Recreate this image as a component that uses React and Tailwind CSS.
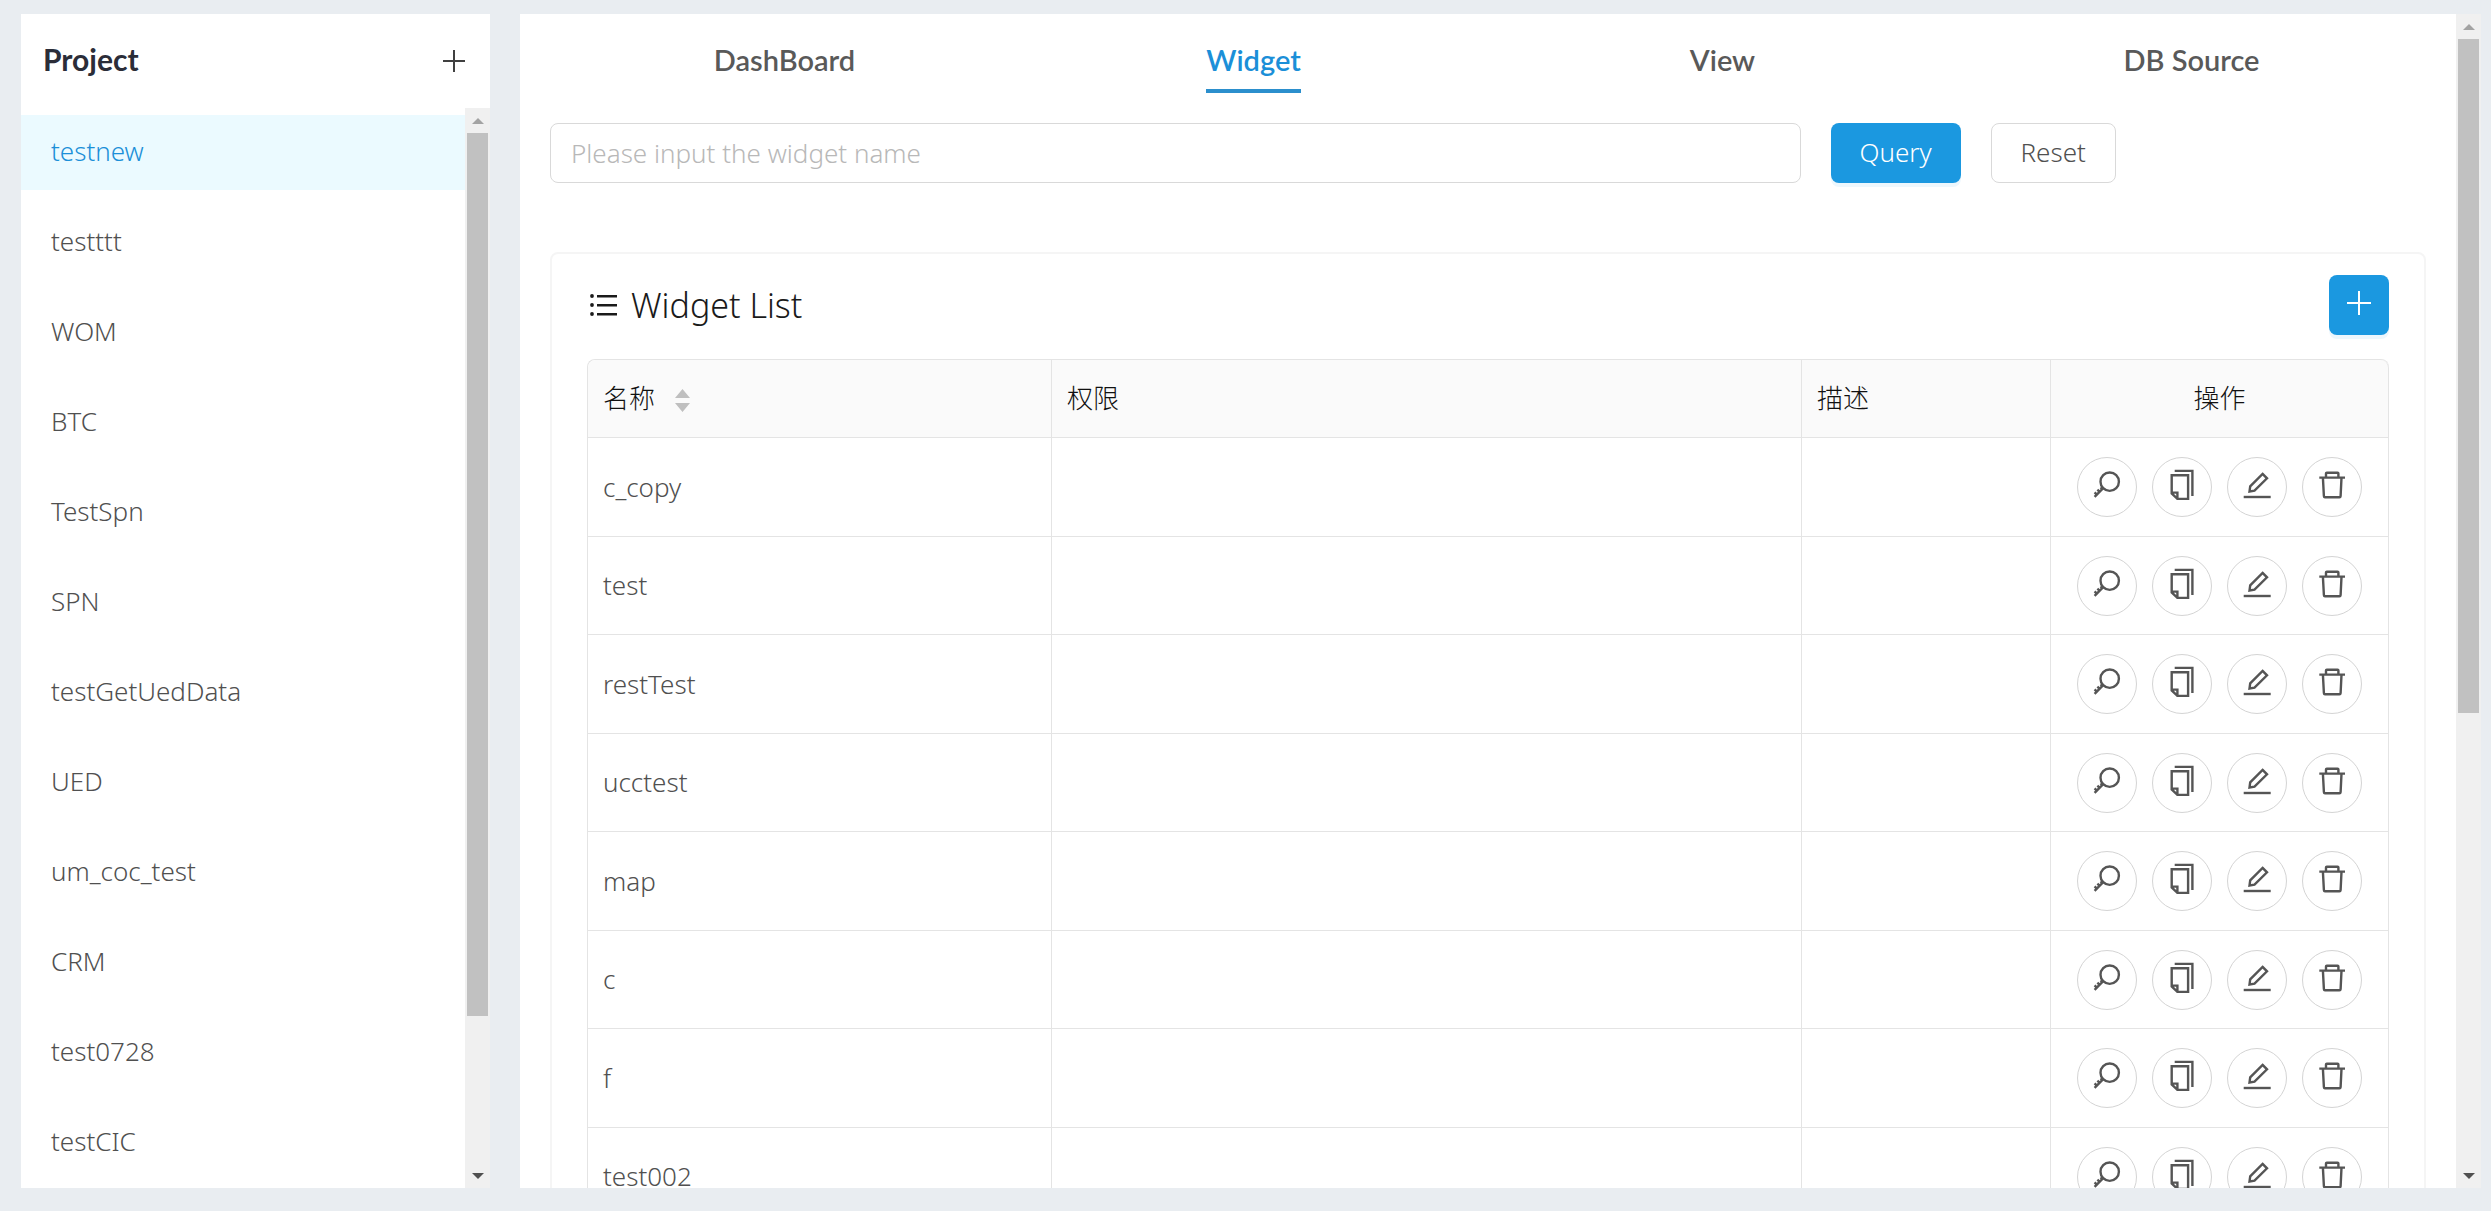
import { useState } from 'react';

const PROJECTS = [
  'testnew',
  'testttt',
  'WOM',
  'BTC',
  'TestSpn',
  'SPN',
  'testGetUedData',
  'UED',
  'um_coc_test',
  'CRM',
  'test0728',
  'testCIC',
];

const TABS = ['DashBoard', 'Widget', 'View', 'DB Source'];

const WIDGETS = ['c_copy', 'test', 'restTest', 'ucctest', 'map', 'c', 'f', 'test002'];

function Icon({ children }) {
  return (
    <svg
      className="w-8 h-8"
      viewBox="-1 -1 32 32"
      fill="none"
      stroke="currentColor"
      strokeWidth="2.4"
      aria-hidden="true"
    >
      {children}
    </svg>
  );
}

const ACTIONS = [
  {
    label: 'Permission',
    icon: (
      <Icon>
        <circle cx="17.7" cy="11.7" r="9.2" />
        <path d="M11.2 18.2 2.6 26.8M8.6 17.4l2 2M5.4 19.6l2.7 2.7M2.6 22.4l2.7 2.7" />
      </Icon>
    ),
  },
  {
    label: 'Copy',
    icon: (
      <Icon>
        <path d="M7.7 .9H25.4V26" />
        <path d="M4.7 5.3H21.1V28.9H10.4L4.7 23.4ZM4.7 22.6H10.4V28.9" />
      </Icon>
    ),
  },
  {
    label: 'Edit',
    icon: (
      <Icon>
        <path d="M20.6 3.9 25 8.3 12.5 20.7 7.5 21.5 8.2 16.3Z" />
        <path d="M1.7 27H28.7" />
      </Icon>
    ),
  },
  {
    label: 'Delete',
    icon: (
      <Icon>
        <path d="M2.3 7.6H28M9 7.6V3.4Q9 2.7 9.8 2.7H20.6Q21.4 2.7 21.4 3.4V7.6" />
        <path d="M5.9 7.6 6.9 26.2Q7 27.3 8 27.3H22.5Q23.5 27.3 23.6 26.2L24.5 7.6" />
      </Icon>
    ),
  },
];

// Classic scrollbar: arrow, track with thumb, arrow
function ScrollBar({ thumb }) {
  return (
    <div className="flex w-[25px] shrink-0 flex-col bg-[#f0f0f0]" aria-hidden="true">
      <div className="flex h-[25px] items-center justify-center">
        <svg className="h-[6px] w-[12px]" viewBox="0 0 12 6">
          <path d="M0 6 6 0l6 6z" fill="#a3a3a3" />
        </svg>
      </div>
      <div className="flex-1 px-[2px]">
        <div className={`${thumb} bg-[#c1c1c1]`} />
      </div>
      <div className="flex h-[25px] items-center justify-center">
        <svg className="h-[6px] w-[12px]" viewBox="0 0 12 6">
          <path d="M0 0h12L6 6z" fill="#505050" />
        </svg>
      </div>
    </div>
  );
}

function Sidebar() {
  const [current, setCurrent] = useState('testnew');

  return (
    <aside className="flex w-[469px] shrink-0 flex-col bg-white">
      <div className="flex h-[94px] shrink-0 items-start justify-between pl-[22px] pr-[25px] pt-6">
        <h1 className="font-[Lato] text-[30px] font-bold leading-[42px] text-[#2b2d38]">Project</h1>
        <button type="button" aria-label="Add project" className="mt-3 text-[#404040]">
          <svg className="h-[22px] w-[22px]" viewBox="0 0 22 22" stroke="currentColor" strokeWidth="2" aria-hidden="true">
            <path d="M11 0v22M0 11h22" />
          </svg>
        </button>
      </div>
      <div className="flex min-h-0 flex-1">
        <ul className="flex flex-1 flex-col gap-[15px] overflow-hidden pt-[7px]">
          {PROJECTS.map((name) => (
            <li key={name}>
              <button
                type="button"
                onClick={() => setCurrent(name)}
                className={`block h-[75px] w-full pb-[2px] pl-[30px] text-left ${
                  name === current ? 'bg-[#ebfaff] text-[#1b8fd8]' : ''
                }`}
              >
                {name}
              </button>
            </li>
          ))}
        </ul>
        <ScrollBar thumb="h-6/7" />
      </div>
    </aside>
  );
}

function Tabs() {
  const [active, setActive] = useState('Widget');

  return (
    <nav className="grid h-[79px] grid-cols-4">
      {TABS.map((tab) => (
        <div key={tab} className="flex justify-center">
          <button
            type="button"
            onClick={() => setActive(tab)}
            className={`border-b-4 pt-4 font-[Lato] text-[29px] font-semibold ${
              tab === active ? 'border-[#2b8fcd] text-[#1b8fd8]' : 'border-transparent text-[#595959]'
            }`}
          >
            {tab}
          </button>
        </div>
      ))}
    </nav>
  );
}

function SearchBar() {
  const [keyword, setKeyword] = useState('');

  return (
    <form className="mt-[30px] flex gap-[30px]" onSubmit={(e) => e.preventDefault()}>
      <input
        type="text"
        aria-label="Widget name"
        value={keyword}
        onChange={(e) => setKeyword(e.target.value)}
        placeholder="Please input the widget name"
        className="h-[60px] w-2/3 rounded-lg border border-[#d9d9d9] px-5 placeholder-[#b8b8b8] outline-none"
      />
      <button
        type="submit"
        className="h-[60px] w-[130px] rounded-lg bg-[#1b98e0] pb-[2px] text-white shadow-[0_4px_0_rgba(27,152,224,0.08)]"
      >
        Query
      </button>
      <button
        type="button"
        onClick={() => setKeyword('')}
        className="h-[60px] w-[125px] rounded-lg border border-[#d9d9d9] bg-white pb-[2px]"
      >
        Reset
      </button>
    </form>
  );
}

function WidgetTable() {
  return (
    <table className="mt-6 w-full table-fixed border-separate border-spacing-0 rounded-t-lg border-l border-t border-[#e4e4e4]">
      <colgroup>
        <col className="w-[464px]" />
        <col />
        <col className="w-[249px]" />
        <col className="w-[338px]" />
      </colgroup>
      <thead className="text-[#111]">
        <tr className="h-[78px] text-left [&>th]:border-b [&>th]:border-r [&>th]:border-[#e4e4e4] [&>th]:bg-[#fafafa] [&>th]:px-[15px] [&>th]:font-light">
          <th className="rounded-tl-lg">
            <button type="button" className="flex items-center gap-5">
              名称
              <svg className="mt-1 h-[23px] w-[15px]" viewBox="0 0 15 23" fill="#bfbfbf" aria-hidden="true">
                <path d="M0 9 7.5 0 15 9zM0 14h15l-7.5 9z" />
              </svg>
            </button>
          </th>
          <th>权限</th>
          <th>描述</th>
          <th className="rounded-tr-lg text-center">操作</th>
        </tr>
      </thead>
      <tbody>
        {WIDGETS.map((name) => (
          <tr
            key={name}
            className="odd:h-[99px] even:h-[98px] [&>td]:border-b [&>td]:border-r [&>td]:border-[#e4e4e4] [&>td]:px-[15px]"
          >
            <td>{name}</td>
            <td />
            <td />
            <td>
              <div className="flex justify-center gap-[15px]">
                {ACTIONS.map(({ label, icon }) => (
                  <button
                    key={label}
                    type="button"
                    aria-label={`${label} ${name}`}
                    className="flex h-[60px] w-[60px] items-center justify-center rounded-full border border-[#d4d4d4] bg-white pb-1 text-[#555]"
                  >
                    {icon}
                  </button>
                ))}
              </div>
            </td>
          </tr>
        ))}
      </tbody>
    </table>
  );
}

function WidgetCard() {
  return (
    <section className="mt-[69px] rounded-lg border-2 border-[#f5f5f5] px-[35px] pb-[35px] pt-[21px]">
      <div className="flex items-center justify-between">
        <h2 className="flex items-center gap-[13px] pl-[3px] text-[34px] leading-[50px] text-[#1a1a1a]">
          <svg className="h-[22px] w-[28px]" viewBox="0 0 28 22" fill="currentColor" aria-hidden="true">
            <circle cx="2" cy="2" r="1.9" />
            <circle cx="2" cy="11" r="1.9" />
            <circle cx="2" cy="20" r="1.9" />
            <path d="M7 1h20v2.4H7zM7 10h20v2.4H7zM7 19h20v2.4H7z" />
          </svg>
          Widget List
        </h2>
        <button
          type="button"
          aria-label="Add widget"
          className="flex h-[60px] w-[60px] items-center justify-center rounded-lg bg-[#1b98e0] pb-1 text-white shadow-[0_4px_0_rgba(27,152,224,0.08)]"
        >
          <svg className="h-6 w-6" viewBox="0 0 24 24" stroke="currentColor" strokeWidth="2" aria-hidden="true">
            <path d="M12 0v24M0 12h24" />
          </svg>
        </button>
      </div>
      <WidgetTable />
    </section>
  );
}

export default function App() {
  return (
    <div className="flex h-screen gap-[30px] overflow-hidden bg-[#e9edf1] pb-[23px] pl-[21px] pr-[10px] pt-[14px] font-['Noto_Sans','Noto_Sans_CJK_SC',sans-serif] text-[26px] font-light text-[#505050]">
      <Sidebar />
      <div className="flex min-w-0 flex-1 bg-white">
        <main className="min-w-0 flex-1 overflow-hidden px-[30px]">
          <Tabs />
          <SearchBar />
          <WidgetCard />
        </main>
        <ScrollBar thumb="h-3/5" />
      </div>
    </div>
  );
}
